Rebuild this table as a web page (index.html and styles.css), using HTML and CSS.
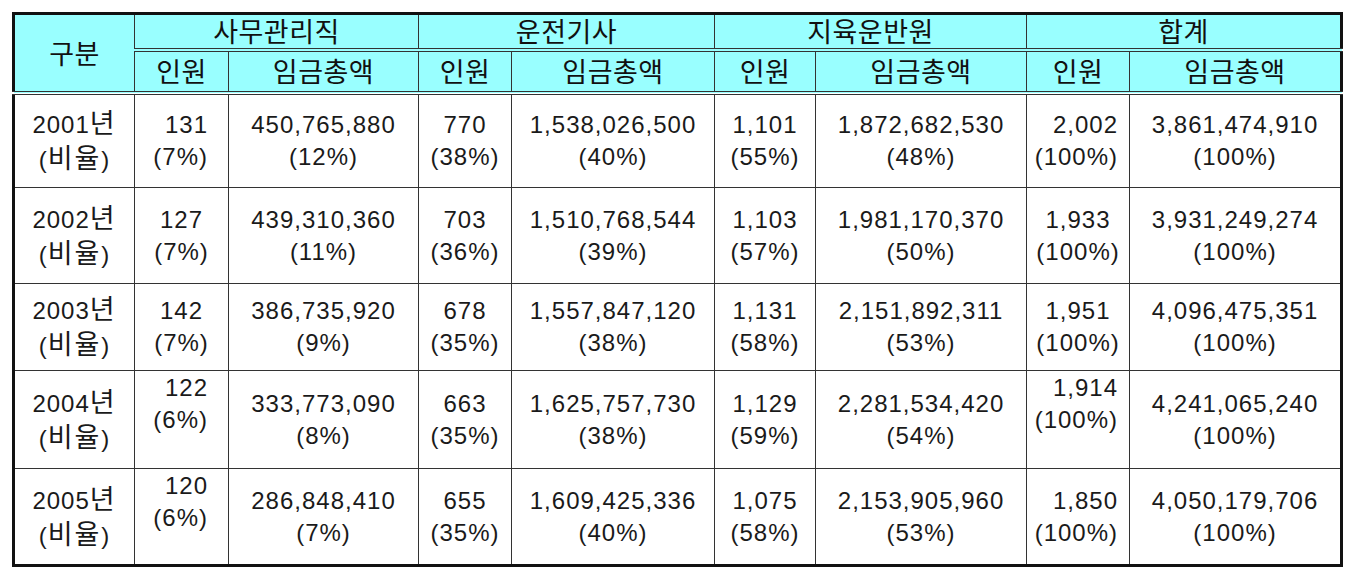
FILE: index.html
```html
<!DOCTYPE html>
<html lang="ko">
<head>
<meta charset="utf-8">
<title>직종별 인원 및 임금총액</title>
<link rel="stylesheet" href="styles.css">
</head>
<body>
<div class="page">
<table class="wage">
  <colgroup>
    <col class="c-label">
    <col class="c-n1"><col class="c-w1">
    <col class="c-n2"><col class="c-w2">
    <col class="c-n3"><col class="c-w3">
    <col class="c-n4"><col class="c-w4">
  </colgroup>
  <thead>
    <tr class="h1">
      <th rowspan="2" class="label">구분</th>
      <th colspan="2" class="group">사무관리직</th>
      <th colspan="2" class="group">운전기사</th>
      <th colspan="2" class="group">지육운반원</th>
      <th colspan="2" class="group">합계</th>
    </tr>
    <tr class="h2">
      <th>인원</th><th>임금총액</th>
      <th>인원</th><th>임금총액</th>
      <th>인원</th><th>임금총액</th>
      <th>인원</th><th>임금총액</th>
    </tr>
  </thead>
  <tbody>
    <tr class="r1">
      <td class="year">2001<span class="ko">년</span><br>(<span class="ko">비율</span>)</td>
      <td class="right p1">131<br>(7%)</td>
      <td>450,765,880<br>(12%)</td>
      <td>770<br>(38%)</td>
      <td>1,538,026,500<br>(40%)</td>
      <td>1,101<br>(55%)</td>
      <td>1,872,682,530<br>(48%)</td>
      <td class="right p2">2,002<br>(100%)</td>
      <td>3,861,474,910<br>(100%)</td>
    </tr>
    <tr class="r2">
      <td class="year">2002<span class="ko">년</span><br>(<span class="ko">비율</span>)</td>
      <td>127<br>(7%)</td>
      <td>439,310,360<br>(11%)</td>
      <td>703<br>(36%)</td>
      <td>1,510,768,544<br>(39%)</td>
      <td>1,103<br>(57%)</td>
      <td>1,981,170,370<br>(50%)</td>
      <td>1,933<br>(100%)</td>
      <td>3,931,249,274<br>(100%)</td>
    </tr>
    <tr class="r3">
      <td class="year">2003<span class="ko">년</span><br>(<span class="ko">비율</span>)</td>
      <td>142<br>(7%)</td>
      <td>386,735,920<br>(9%)</td>
      <td>678<br>(35%)</td>
      <td>1,557,847,120<br>(38%)</td>
      <td>1,131<br>(58%)</td>
      <td>2,151,892,311<br>(53%)</td>
      <td>1,951<br>(100%)</td>
      <td>4,096,475,351<br>(100%)</td>
    </tr>
    <tr class="r4">
      <td class="year">2004<span class="ko">년</span><br>(<span class="ko">비율</span>)</td>
      <td class="right p1 top">122<br>(6%)</td>
      <td>333,773,090<br>(8%)</td>
      <td>663<br>(35%)</td>
      <td>1,625,757,730<br>(38%)</td>
      <td>1,129<br>(59%)</td>
      <td>2,281,534,420<br>(54%)</td>
      <td class="right p2 top">1,914<br>(100%)</td>
      <td>4,241,065,240<br>(100%)</td>
    </tr>
    <tr class="r5">
      <td class="year">2005<span class="ko">년</span><br>(<span class="ko">비율</span>)</td>
      <td class="right p1 top">120<br>(6%)</td>
      <td>286,848,410<br>(7%)</td>
      <td>655<br>(35%)</td>
      <td>1,609,425,336<br>(40%)</td>
      <td>1,075<br>(58%)</td>
      <td>2,153,905,960<br>(53%)</td>
      <td class="right p2">1,850<br>(100%)</td>
      <td>4,050,179,706<br>(100%)</td>
    </tr>
  </tbody>
</table>
</div>
</body>
</html>
```

FILE: styles.css
```css
html, body {
  margin: 0;
  padding: 0;
  background: #ffffff;
}

.page {
  padding: 12px 0 0 12px;
}

.wage {
  border-collapse: collapse;
  table-layout: fixed;
  width: 1331px;
  border: 3px solid #111111;
  font-family: "Liberation Sans", "Noto Sans CJK KR", sans-serif;
  font-size: 24px;
  line-height: 32px;
  letter-spacing: 1px;
  color: #1a1a1a;
}

.c-label { width: 121px; }
.c-n1 { width: 94px; }
.c-w1 { width: 190px; }
.c-n2 { width: 93px; }
.c-w2 { width: 203px; }
.c-n3 { width: 101px; }
.c-w3 { width: 211px; }
.c-n4 { width: 103px; }
.c-w4 { width: 212px; }

.wage th,
.wage td {
  border: 1px solid #333333;
  padding: 0;
  text-align: center;
  vertical-align: middle;
  white-space: nowrap;
}

.wage th {
  background: #99ffff;
  font-family: "Noto Sans CJK KR", "Liberation Sans", sans-serif;
  font-weight: normal;
  font-size: 27px;
  line-height: 30px;
  letter-spacing: 0.5px;
  color: #111111;
}

.wage .group {
  border-bottom: 4px double #333333;
}

.wage .h2 th,
.wage .label {
  border-bottom: 4px double #333333;
}

.h1 { height: 36px; }
.h2 { height: 43px; }
.r1 { height: 95px; }
.r2 { height: 96px; }
.r3 { height: 87px; }
.r4 { height: 98px; }
.r5 { height: 97px; }

.wage td.right {
  text-align: right;
}

.wage td.p1 {
  padding-right: 20px;
}

.wage td.p2 {
  padding-right: 11px;
}

.wage td.top {
  vertical-align: top;
  padding-top: 1px;
}

.ko {
  font-family: "Noto Sans CJK KR", sans-serif;
  font-size: 27px;
  letter-spacing: 2px;
}
```
